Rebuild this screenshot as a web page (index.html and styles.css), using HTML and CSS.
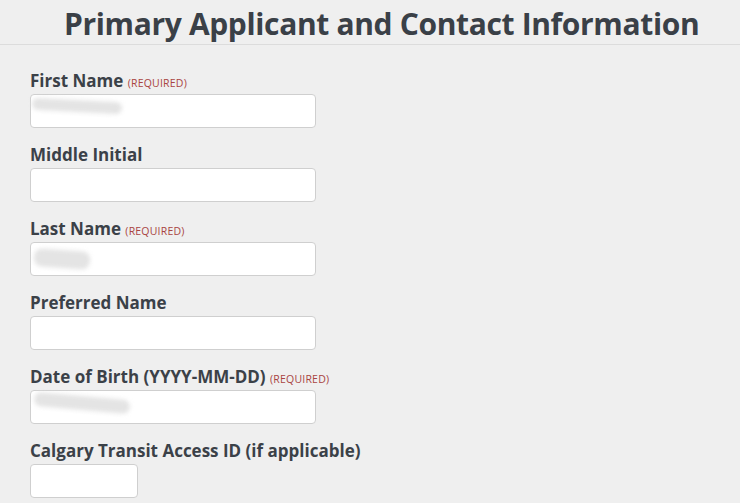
FILE: index.html
```html
<!DOCTYPE html>
<html>
<head>
<meta charset="utf-8">
<link rel="stylesheet" href="styles.css">
</head>
<body>
<div class="page">
  <h1 class="title">Primary Applicant and Contact Information</h1>
  <form class="form">
    <div class="field">
      <label class="label">First Name <span class="req">(REQUIRED)</span></label>
      <div class="input-wrap"><div class="input"></div><span class="smudge s1"></span></div>
    </div>
    <div class="field">
      <label class="label">Middle Initial</label>
      <div class="input-wrap"><div class="input"></div></div>
    </div>
    <div class="field">
      <label class="label">Last Name <span class="req">(REQUIRED)</span></label>
      <div class="input-wrap"><div class="input"></div><span class="smudge s2"></span></div>
    </div>
    <div class="field">
      <label class="label">Preferred Name</label>
      <div class="input-wrap"><div class="input"></div></div>
    </div>
    <div class="field">
      <label class="label">Date of Birth (YYYY-MM-DD) <span class="req">(REQUIRED)</span></label>
      <div class="input-wrap"><div class="input"></div><span class="smudge s3"></span></div>
    </div>
    <div class="field">
      <label class="label">Calgary Transit Access ID (if applicable)</label>
      <div class="input-wrap short"><div class="input"></div></div>
    </div>
  </form>
</div>
</body>
</html>
```
FILE: styles.css
```css
html, body {
  margin: 0;
  padding: 0;
  background: #efefef;
  font-family: "Open Sans", "Liberation Sans", sans-serif;
  color: #3b4148;
}
.page {
  width: 740px;
  height: 503px;
  overflow: hidden;
}
.title {
  margin: 0;
  padding: 7px 0 3px 64px;
  font-size: 30px;
  font-weight: 700;
  line-height: 34px;
  letter-spacing: -0.35px;
  color: #3a4047;
  border-bottom: 1px solid #dcdcdc;
  white-space: nowrap;
}
.form {
  padding: 24px 0 0 30px;
  display: flex;
  flex-direction: column;
  gap: 15px;
}
.field {
  display: flex;
  flex-direction: column;
  gap: 1px;
}
.label {
  font-size: 17px;
  font-weight: 700;
  line-height: 24px;
  height: 24px;
  color: #3b4148;
}
.req {
  font-size: 10.5px;
  font-weight: 400;
  color: #a94442;
  letter-spacing: 0.2px;
}
.input-wrap {
  position: relative;
  width: 286px;
}
.input-wrap.short {
  width: 108px;
}
.input {
  height: 32px;
  background: #fff;
  border: 1px solid #cfcfcf;
  border-radius: 4px;
}
.smudge {
  position: absolute;
  background: #e4e4e4;
  border-radius: 8px;
  filter: blur(2px);
}
.s1 { left: 2px; top: 6px; width: 90px; height: 12px; transform: rotate(3deg); }
.s2 { left: 4px; top: 8px; width: 56px; height: 18px; transform: rotate(4deg); }
.s3 { left: 4px; top: 6px; width: 96px; height: 14px; transform: rotate(5deg); }
```
